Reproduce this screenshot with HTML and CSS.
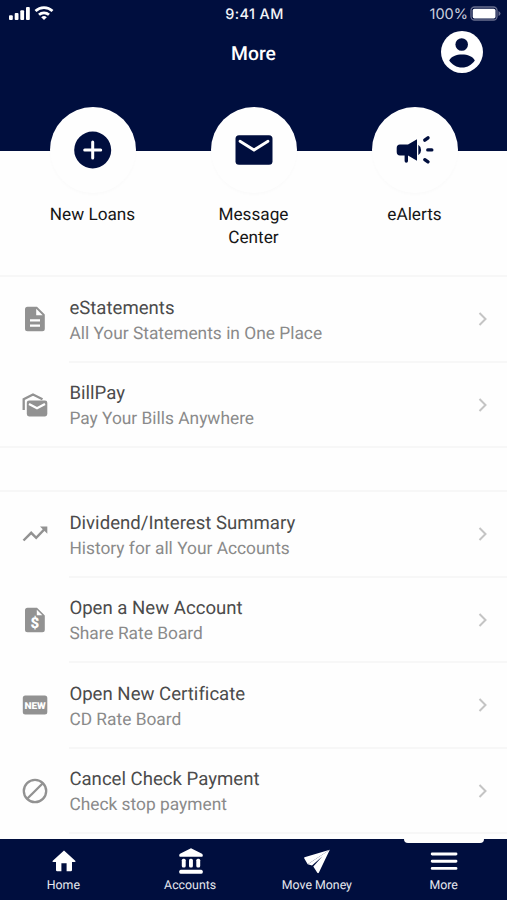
FILE: index.html
```
<!DOCTYPE html>
<html lang="en">
<head>
    <meta charset="UTF-8">
    <meta name="viewport" content="width=device-width, initial-scale=1.0">
    <title>More</title>
    <link rel="stylesheet" href="styles.css">
</head>
<body>
    <div class="app">
        <header class="header">
            <div class="status-bar">
                <div class="signal">
                    <svg width="46" height="16" viewBox="0 0 46 16" fill="#fff">
                        <rect x="1" y="10.3" width="3.8" height="4.7" rx="1"/>
                        <rect x="6.7" y="8" width="3.8" height="7" rx="1"/>
                        <rect x="12.3" y="5.2" width="3.8" height="9.8" rx="1"/>
                        <rect x="18" y="2" width="3.8" height="13" rx="1"/>
                        <g fill="none" stroke="#fff" stroke-width="2.7">
                            <path d="M27.5 6.1a12.3 12.3 0 0 1 17 0"/>
                            <path d="M31 9.8a7.3 7.3 0 0 1 10 0"/>
                        </g>
                        <path d="M36 15.1l-2.8-2.8a4 4 0 0 1 5.6 0z"/>
                    </svg>
                </div>
                <div class="time">9:41 AM</div>
                <div class="battery">
                    <span>100%</span>
                    <svg width="31" height="15" viewBox="0 0 31 15">
                        <rect x="1" y="1" width="26" height="13" rx="3.5" fill="none" stroke="#686f8f" stroke-width="1.3"/>
                        <rect x="2.7" y="2.7" width="22.8" height="9.8" rx="1.8" fill="#fff"/>
                        <path d="M28.5 5v5q2-1 2-2.5t-2-2.5z" fill="#686f8f"/>
                    </svg>
                </div>
            </div>
            <div class="title-bar">
                <h1>More</h1>
                <svg class="profile" width="42" height="42" viewBox="0 0 42 42">
                    <circle cx="21" cy="21" r="21" fill="#fff"/>
                    <circle cx="20.7" cy="13.5" r="6.3" fill="#000e3e"/>
                    <path d="M8.2 29.5C10.2 25.3 15.5 23.6 21 23.6s10.8 1.7 12.8 5.9C31 33.5 26.5 36.600 21 36.600S11 33.500 8.200 29.500z" fill="#000e3e"/>
                </svg>
            </div>
        </header>

        <section class="shortcuts">
            <div class="shortcut">
                <div class="circle">
                    <svg width="38" height="38" viewBox="0 0 38 38">
                        <circle cx="18.7" cy="19" r="18.5" fill="#000e3e"/>
                        <path d="M18.7 11v16M10.7 19h16" stroke="#fff" stroke-width="3" stroke-linecap="round"/>
                    </svg>
                </div>
                <p>New Loans</p>
            </div>
            <div class="shortcut">
                <div class="circle">
                    <svg width="38" height="30" viewBox="0 0 38 30">
                        <rect x="0.5" y="0.2" width="37" height="29.6" rx="3.5" fill="#000e3e"/>
                        <path d="M5 6.2l14 8.800 14-8.800" fill="none" stroke="#fff" stroke-width="2.8" stroke-linecap="round"/>
                    </svg>
                </div>
                <p>Message Center</p>
            </div>
            <div class="shortcut">
                <div class="circle">
                    <svg width="38" height="30" viewBox="0 0 38 30" fill="#000e3e">
                        <path d="M4 9.500h8L21 4.200v21.500l-9-5.200v5.500a1.600 1.600 0 0 1-3.400 0v-5.500H4a3.500 3.500 0 0 1-3.300-3.500v-4A3.500 3.500 0 0 1 4 9.500z"/>
                        <path d="M22.300 9.800q2.800 2 2.800 5.200t-2.800 5.200z"/>
                        <path d="M28.800 5.200l3.200-2.400M31.800 14.900h4M28.800 24.700l3.200 2.200" stroke="#000e3e" stroke-width="3.400" stroke-linecap="round"/>
                    </svg>
                </div>
                <p>eAlerts</p>
            </div>
        </section>

        <ul class="list">
            <li class="row">
                <svg class="icon" viewBox="0 0 28 28">
                    <path d="M6.500 1.800h9.500l7.800 7.800v14.200a2.500 2.500 0 0 1-2.500 2.500H6.500A2.500 2.500 0 0 1 4 23.800V4.300a2.500 2.500 0 0 1 2.500-2.500zM15.200 3.800v6.500h6.500z" fill="#929292" fill-rule="evenodd"/>
                    <path d="M9 15.300h10M9 20.600h10" stroke="#fff" stroke-width="2.2"/>
                </svg>
                <div class="text">
                    <h2>eStatements</h2>
                    <p>All Your Statements in One Place</p>
                </div>
                <svg class="chevron" viewBox="0 0 10 14"><path d="M1.500 1l6 6-6 6"/></svg>
            </li>
            <li class="row">
                <svg class="icon" viewBox="0 0 28 28">
                    <path d="M2.700 19V8.200L12 3.500l9.500 4.700" fill="none" stroke="#929292" stroke-width="2.3"/>
                    <rect x="5.8" y="9.4" width="20.5" height="16" rx="2.3" fill="#929292"/>
                    <path d="M8 13l8 4.300 8-4.300" fill="none" stroke="#fff" stroke-width="2.3"/>
                </svg>
                <div class="text">
                    <h2>BillPay</h2>
                    <p>Pay Your Bills Anywhere</p>
                </div>
                <svg class="chevron" viewBox="0 0 10 14"><path d="M1.500 1l6 6-6 6"/></svg>
            </li>
        </ul>

        <ul class="list">
            <li class="row">
                <svg class="icon" viewBox="0 0 28 28">
                    <path d="M2.500 20.500l7.700-7.700 5 5 9.300-9.600" fill="none" stroke="#929292" stroke-width="2.4"/>
                    <path d="M19 6.500h7.300v7.300z" fill="#929292"/>
                </svg>
                <div class="text">
                    <h2>Dividend/Interest Summary</h2>
                    <p>History for all Your Accounts</p>
                </div>
                <svg class="chevron" viewBox="0 0 10 14"><path d="M1.500 1l6 6-6 6"/></svg>
            </li>
            <li class="row">
                <svg class="icon" viewBox="0 0 28 28">
                    <path d="M6.500 1.800h9.500l7.800 7.800v14.200a2.500 2.500 0 0 1-2.500 2.500H6.500A2.500 2.500 0 0 1 4 23.800V4.300a2.500 2.500 0 0 1 2.500-2.500zM15.800 3.800v5.500h5.500z" fill="#929292" fill-rule="evenodd"/>
                    <text x="13.8" y="22" class="dollar">$</text>
                </svg>
                <div class="text">
                    <h2>Open a New Account</h2>
                    <p>Share Rate Board</p>
                </div>
                <svg class="chevron" viewBox="0 0 10 14"><path d="M1.500 1l6 6-6 6"/></svg>
            </li>
            <li class="row">
                <svg class="icon" viewBox="0 0 28 28">
                    <rect x="1.8" y="4.4" width="24.5" height="19.2" rx="2.5" fill="#929292"/>
                    <text x="3.4" y="17.5" textLength="21.4" lengthAdjust="spacingAndGlyphs" class="new">NEW</text>
                </svg>
                <div class="text">
                    <h2>Open New Certificate</h2>
                    <p>CD Rate Board</p>
                </div>
                <svg class="chevron" viewBox="0 0 10 14"><path d="M1.500 1l6 6-6 6"/></svg>
            </li>
            <li class="row">
                <svg class="icon" viewBox="0 0 28 28" fill="none" stroke="#929292" stroke-width="2.3">
                    <circle cx="14" cy="14" r="11.2"/>
                    <path d="M6.200 21.800L21.800 6.200"/>
                </svg>
                <div class="text">
                    <h2>Cancel Check Payment</h2>
                    <p>Check stop payment</p>
                </div>
                <svg class="chevron" viewBox="0 0 10 14"><path d="M1.500 1l6 6-6 6"/></svg>
            </li>
        </ul>

        <nav class="tabs">
            <div class="tab">
                <svg viewBox="0 0 28 28" fill="#fff">
                    <path d="M14 3.500L25.500 14q.4 1-1 1H22v8q0 1.200-1.200 1.200h-4.200v-8h-5.200v8H7.200Q6 24.200 6 23v-8H3.500q-1.400 0-1-1z"/>
                </svg>
                <span>Home</span>
            </div>
            <div class="tab">
                <svg viewBox="0 0 28 28" fill="#fff">
                    <path d="M14 1.200L25 6.800q.8.500.8 2 0 .9-1 .9H3.200q-1 0-1-.9 0-1.500.8-2z"/>
                    <rect x="4.8" y="11.8" width="3.9" height="8.8" rx="1.5"/>
                    <rect x="12" y="11.8" width="3.9" height="8.8" rx="1.5"/>
                    <rect x="19.3" y="11.8" width="3.9" height="8.8" rx="1.5"/>
                    <rect x="2.3" y="22.7" width="23.4" height="4" rx="1.5"/>
                </svg>
                <span>Accounts</span>
            </div>
            <div class="tab">
                <svg viewBox="0 0 28 28" fill="#fff">
                    <path d="M26.800 2.800L1.500 10.300Q.8 10.600 1.300 11.400L4.700 17.300z"/>
                    <path d="M26.800 2.800L15.800 25.800Q15 26.600 14.300 25.800L10.300 19.600 19.500 9.300 9 18.500 4.700 17.300z"/>
                </svg>
                <span>Move Money</span>
            </div>
            <div class="tab active">
                <svg viewBox="0 0 28 28">
                    <path d="M2.200 7h23.800M2.200 14.200h23.800M2.200 21.400h23.800" stroke="#fff" stroke-width="2.9" stroke-linecap="round"/>
                </svg>
                <span>More</span>
            </div>
        </nav>
    </div>
</body>
</html>
```
FILE: styles.css
```
* {
    margin: 0;
    padding: 0;
    box-sizing: border-box;
}

body {
    font-family: Roboto, sans-serif;
    font-variant-ligatures: none;
    text-rendering: geometricPrecision;
    background: #fefefe;
}

.app {
    height: 900px;
    display: flex;
    flex-direction: column;
    overflow: hidden;
}

svg {
    display: block;
    flex-shrink: 0;
}

.header {
    height: 151px;
    flex-shrink: 0;
    background: #000e3e;
    color: #fff;
}

.status-bar {
    height: 28px;
    padding: 0 6px 0 8px;
    display: grid;
    grid-template-columns: 1fr auto 1fr;
    align-items: center;
}

.signal {
    padding-bottom: 3px;
}

.time {
    font-family: Inter, sans-serif;
    font-size: 14.4px;
    font-weight: 500;
    letter-spacing: 0.4px;
    color: #f2f3f8;
}

.battery {
    display: flex;
    justify-content: flex-end;
    align-items: center;
    gap: 2px;
    padding-bottom: 1px;
    font-family: Inter, sans-serif;
    font-size: 14.5px;
    color: #ccd0df;
}

.battery span {
    padding-top: 2px;
}

.title-bar {
    height: 48px;
    padding: 0 24px;
    display: grid;
    grid-template-columns: 1fr auto 1fr;
    align-items: center;
}

.title-bar h1 {
    grid-column: 2;
    padding-top: 3px;
    font-size: 19.3px;
    font-weight: 500;
}

.profile {
    justify-self: end;
}

.shortcuts {
    height: 126px;
    flex-shrink: 0;
    padding: 0 12px;
    display: flex;
    border-bottom: 2px solid #f7f7f7;
}

.shortcut {
    flex: 1;
    display: flex;
    flex-direction: column;
    align-items: center;
    margin-top: -44px;
}

.circle {
    width: 86px;
    height: 86px;
    flex-shrink: 0;
    display: flex;
    align-items: center;
    justify-content: center;
    border-radius: 50%;
    background: #fefefe;
    box-shadow: 0 2px 3px rgba(0, 0, 0, 0.015);
}

.shortcut p {
    width: 90px;
    margin-top: 11px;
    font-size: 17.2px;
    line-height: 23px;
    text-align: center;
    color: #161616;
}

.list {
    flex-shrink: 0;
    list-style: none;
}

.list + .list {
    margin-top: 42px;
    border-top: 2px solid #f7f7f7;
}

.row {
    height: 85.5px;
    padding: 0 19px 1px 21px;
    display: flex;
    align-items: center;
    position: relative;
}

/* divider under each row, starts at the text */
.row::after {
    content: "";
    position: absolute;
    left: 69px;
    right: 0;
    bottom: 0;
    height: 2px;
    background: #f7f7f7;
}

.list:first-of-type .row:last-child::after {
    left: 0;
}

.icon {
    width: 28px;
    height: 28px;
    margin-right: 20.4px;
}

.text {
    flex: 1;
    padding-top: 3px;
}

.text h2 {
    font-size: 18.6px;
    font-weight: 400;
    line-height: 26px;
    color: #4b4b4b;
}

.text p {
    font-size: 17.35px;
    line-height: 26px;
    color: #8a8a8a;
}

.chevron {
    width: 10px;
    height: 14px;
    fill: none;
    stroke: #c4c4c4;
    stroke-width: 2;
}

.dollar {
    font-size: 15px;
    font-weight: 900;
    text-anchor: middle;
    fill: #fff;
}

.new {
    font-size: 9.5px;
    font-weight: 900;
    fill: #fff;
}

.tabs {
    height: 61px;
    margin-top: auto;
    flex-shrink: 0;
    display: flex;
    background: #000e3e;
}

.tab {
    flex: 1;
    padding-top: 8px;
    display: flex;
    flex-direction: column;
    align-items: center;
    position: relative;
}

.tab svg {
    width: 28px;
    height: 28px;
    margin-left: 1px;
}

.tab span {
    margin-top: 3px;
    font-size: 12.35px;
    line-height: 16px;
    color: #e6e8f0;
}

.tab.active::before {
    content: "";
    position: absolute;
    top: 0;
    width: 80px;
    height: 4px;
    border-radius: 0 0 4px 4px;
    background: #fefefe;
}
```
